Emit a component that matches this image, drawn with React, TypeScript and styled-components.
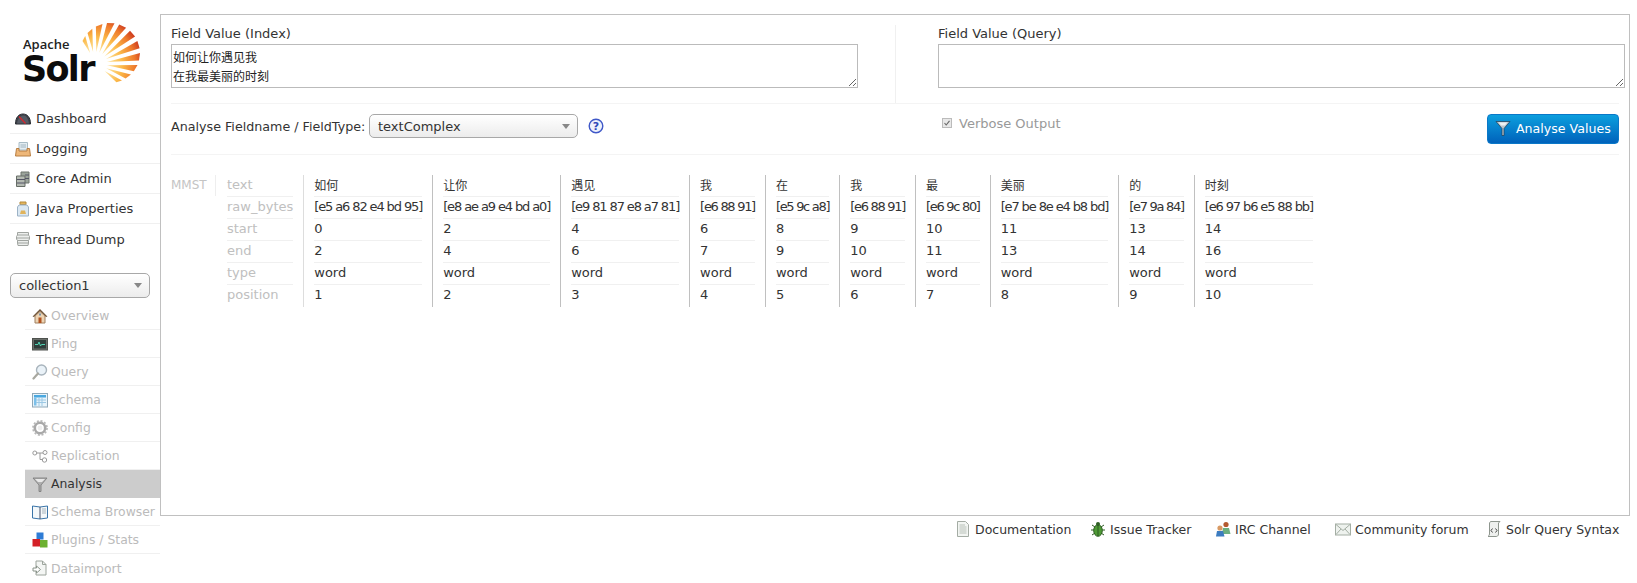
import React from "react";
import styled, { createGlobalStyle } from "styled-components";

const GlobalStyle = createGlobalStyle`
  html, body {
    margin: 0;
    padding: 0;
    height: 583px;
    overflow: hidden;
    background: #fff;
  }
  body {
    font-family: "DejaVu Sans", "Noto Sans CJK SC", sans-serif;
    font-size: 13px;
    color: #333;
  }
`;

const Page = styled.div`
  display: flex;
  width: 1637px;
  height: 583px;
  overflow: hidden;
`;

/* ---------- sidebar ---------- */

const Sidebar = styled.div`
  width: 160px;
  flex: none;
`;

const Logo = styled.div`
  display: flex;
  height: 104px;
  padding: 18px 0 0 22px;
  box-sizing: border-box;
`;

const LogoText = styled.div`
  width: 75px;
  flex: none;
  padding-top: 18px;
`;

const Apache = styled.div`
  font-family: "Open Sans", sans-serif;
  font-weight: 600;
  font-size: 13px;
  line-height: 17px;
  color: #222;
  margin-left: 1px;
`;

const SolrWord = styled.div`
  font-family: "DejaVu Sans", sans-serif;
  font-weight: 700;
  font-size: 35px;
  line-height: 33px;
  letter-spacing: -1.7px;
  color: #0c0c0c;
`;

const Nav = styled.div`
  margin-left: 10px;
`;

const NavRow = styled.div`
  display: flex;
  align-items: center;
  height: 30px;
  box-sizing: border-box;
  padding-left: 5px;
  gap: 5px;
  border-bottom: 1px solid #f0f0f0;
  color: #333;
  &:last-child {
    border-bottom: none;
  }
`;

const CoreSelect = styled.div`
  display: flex;
  align-items: center;
  justify-content: space-between;
  box-sizing: border-box;
  width: 140px;
  height: 25px;
  margin: 19px 0 0 10px;
  padding: 0 7px 0 8px;
  border: 1px solid #a8a8a8;
  border-radius: 5px;
  background: linear-gradient(#fff, #ececec);
  color: #333;
`;

const Caret = styled.span`
  width: 0;
  height: 0;
  border-left: 4px solid transparent;
  border-right: 4px solid transparent;
  border-top: 5px solid #888;
`;

const CoreMenu = styled.div`
  margin: 4px 0 0 25px;
`;

const CoreRow = styled.div<{ $active?: boolean }>`
  display: flex;
  align-items: center;
  height: 28px;
  box-sizing: border-box;
  padding-left: 7px;
  gap: 3px;
  font-size: 12.4px;
  white-space: nowrap;
  color: ${(p) => (p.$active ? "#333" : "#bbb")};
  background: ${(p) => (p.$active ? "#ccc" : "transparent")};
  border-bottom: 1px solid ${(p) => (p.$active ? "#ccc" : "#f0f0f0")};
  &:last-child {
    border-bottom: none;
  }
`;

const IconSvg = styled.svg`
  width: 16px;
  height: 16px;
  flex: none;
`;

/* ---------- main ---------- */

const Main = styled.div`
  flex: 1;
  min-width: 0;
  padding: 14px 7px 0 0;
`;

const Box = styled.div`
  box-sizing: border-box;
  height: 502px;
  padding: 10px 10px 0 10px;
  border: 1px solid #c0c0c0;
`;

const Fields = styled.div`
  display: grid;
  grid-template-columns: 724px 1fr;
  height: 79px;
  box-sizing: border-box;
  border-bottom: 1px solid #f4f4f4;
`;

const Field = styled.div<{ $right?: boolean }>`
  padding-left: ${(p) => (p.$right ? "42px" : "0")};
  border-left: ${(p) => (p.$right ? "1px solid #f0f0f0" : "none")};
`;

const FieldLabel = styled.div`
  height: 19px;
  line-height: 18px;
  color: #333;
`;

const FieldArea = styled.textarea`
  display: block;
  box-sizing: border-box;
  width: 687px;
  height: 44px;
  margin: 0;
  padding: 2px 1px;
  border: 1px solid #bbb;
  border-radius: 0;
  outline: none;
  font-family: "Noto Sans CJK SC", sans-serif;
  font-size: 12px;
  line-height: 19px;
  color: #222;
  overflow: hidden;
`;

const Controls = styled.div`
  display: grid;
  grid-template-columns: 724px 1fr;
  height: 51px;
  box-sizing: border-box;
  padding-top: 10px;
  border-bottom: 1px solid #f4f4f4;
`;

const FieldTypeGroup = styled.div`
  display: flex;
  align-items: flex-start;
`;

const FieldTypeLabel = styled.div`
  line-height: 26px;
  width: 198px;
  flex: none;
  font-size: 12.7px;
  white-space: nowrap;
`;

const TypeSelect = styled(CoreSelect)`
  width: 209px;
  height: 24px;
  margin: 0;
`;

const HelpIcon = styled.svg`
  width: 16px;
  height: 16px;
  margin: 4px 0 0 10px;
`;

const VerboseGroup = styled.div`
  display: flex;
  align-items: flex-start;
  padding-left: 46px;
`;

const Verbose = styled.div`
  display: flex;
  align-items: center;
  gap: 6px;
  height: 18px;
  color: #999;
`;

const AnalyseButton = styled.div`
  display: flex;
  align-items: center;
  gap: 5px;
  box-sizing: border-box;
  width: 132px;
  height: 30px;
  margin-left: auto;
  padding: 0 0 2px 7px;
  border: 1px solid #0a78c8;
  border-radius: 4px;
  background: linear-gradient(#0c9fde, #0062bb);
  color: #fff;
  font-size: 12.6px;
  white-space: nowrap;
`;

const Result = styled.div`
  display: flex;
  margin-top: 20px;
`;

const FilterName = styled.div`
  width: 44px;
  height: 21px;
  flex: none;
  line-height: 20px;
  font-size: 12px;
  color: #c4c4c4;
  border-right: 1px solid #eee;
`;

const Column = styled.div<{ $first?: boolean; $labels?: boolean }>`
  padding: 0 10px;
  margin-left: ${(p) => (p.$labels ? "1px" : "0")};
  border-left: ${(p) => (p.$labels ? "none" : p.$first ? "1px solid #ddd" : "1px solid #c0c0c0")};
  color: ${(p) => (p.$labels ? "#c0c0c0" : "#333")};
`;

const Cell = styled.div<{ $cjk?: boolean }>`
  height: 22px;
  box-sizing: border-box;
  line-height: ${(p) => (p.$cjk ? "22px" : "20px")};
  white-space: nowrap;
  border-bottom: 1px solid #f0f0f0;
  font-size: ${(p) => (p.$cjk ? "12px" : "13px")};
  &:last-child {
    border-bottom: none;
  }
`;

const RawCell = styled(Cell)<{ $short: boolean }>`
  letter-spacing: ${(p) => (p.$short ? "-1.3px" : "-1.12px")};
`;

const Footer = styled.div`
  display: flex;
  justify-content: flex-end;
  height: 18px;
  margin-top: 4px;
  padding-right: 10px;
`;

const FooterLink = styled.div<{ $w: number }>`
  display: flex;
  align-items: center;
  gap: 4px;
  width: ${(p) => p.$w}px;
  font-size: 12.5px;
  white-space: nowrap;
`;

/* ---------- drawings ---------- */

const icons: Record<string, React.ReactNode> = {
  dashboard: (
    <>
      <path d="M0.5 13 C0.5 6 4 3 8 3 S15.5 6 15.5 13 Z" fill="#3c4048" stroke="#2a2d33" />
      <path d="M2 12.5 C3 7 5 5 8 4.5 S13 7 14 12.5" fill="#555a64" />
      <path d="M4 5.5 L10.5 12.5" stroke="#d8262c" strokeWidth="1.3" />
    </>
  ),
  logging: (
    <>
      <path d="M4 1.5 H12.5 V9 H4 Z" fill="#e4edf2" stroke="#a8bcc6" />
      <path d="M5.5 4 H11 M5.5 6 H11" stroke="#9fb4c0" />
      <path d="M1.5 7.5 H4 V10 H12 V7.5 H14.5 L15.5 15 H0.5 Z" fill="#eeb779" stroke="#b87e42" />
    </>
  ),
  core: (
    <>
      <path d="M6 1 H14 V12 H6 Z" fill="#9aa39a" stroke="#6c746c" />
      <path d="M1.5 5 H10 V15.5 H1.5 Z" fill="#b4bab2" stroke="#666d66" />
      <path d="M2 8.5 H10 M2 12 H10 M10 4 H14 M10 7.5 H14" stroke="#556" />
    </>
  ),
  java: (
    <>
      <path d="M5 1 H11 V3.5 H5 Z" fill="#e3b55c" stroke="#b58a3a" />
      <path d="M4 4 H12 L13.5 6 V15 H2.5 V6 Z" fill="#dbe8f2" stroke="#9cb2c6" />
      <path d="M6 9.5 H10 L11 13 H5 Z" fill="#e0b35c" />
    </>
  ),
  thread: (
    <>
      <path d="M2.5 1.5 H13.5 V4 L14.5 5.5 V8 L13.5 9.5 V12 L13 14.5 H3 L2.5 12 V9.5 L1.5 8 V5.5 L2.5 4 Z" fill="#eceeec" stroke="#a0a4a0" />
      <path d="M2.5 4 H13.5 M2 7 H14 M2.5 9.5 H13.5 M3 12 H13" stroke="#a0a4a0" />
    </>
  ),
  overview: (
    <>
      <path d="M8 1 L15.5 8.5 L14 9 L8 3.5 L2 9 L0.5 8.5 Z" fill="#70573c" />
      <path d="M3 8 L8 3.5 L13 8 V15 H3 Z" fill="#ecd4b4" stroke="#a08060" />
      <rect x="6.5" y="9.5" width="3" height="5.5" fill="#b2521e" />
      <rect x="7" y="5.5" width="2" height="2" fill="#7a94a8" />
    </>
  ),
  ping: (
    <>
      <rect x="0.5" y="2.5" width="15" height="11.5" fill="#6a6e6a" stroke="#4e524e" />
      <rect x="2" y="4" width="12" height="8.5" fill="#2e3d3a" />
      <path d="M3 8.5 H6 L7 6 L8.5 10 L9.5 8.5 H13" stroke="#4fd0b0" fill="none" />
    </>
  ),
  query: (
    <>
      <circle cx="9.5" cy="6" r="5" fill="#eaf2f8" stroke="#a8b4bc" strokeWidth="1.4" />
      <path d="M6 9.5 L1.5 14.5" stroke="#a8a8a0" strokeWidth="2.2" strokeLinecap="round" />
    </>
  ),
  schema: (
    <>
      <rect x="0.5" y="1.5" width="15" height="13.5" fill="#e8f4fb" stroke="#8fa8b8" />
      <rect x="2" y="3" width="12" height="2.5" fill="#4aa8e0" />
      <rect x="2" y="5.5" width="2.5" height="8" fill="#7cc0ea" />
      <path d="M7 5.5 V14 M10 5.5 V14 M4 8 H14 M4 10.5 H14" stroke="#9cc8e4" />
    </>
  ),
  config: (
    <>
      <circle cx="8" cy="8" r="5.2" fill="none" stroke="#a8a8a8" strokeWidth="2.6" />
      <circle cx="8" cy="8" r="7" fill="none" stroke="#b8b8b8" strokeWidth="1.8" strokeDasharray="2 1.7" />
      <circle cx="8" cy="8" r="2.4" fill="#eee" />
    </>
  ),
  replication: (
    <>
      <path d="M4 5 H12 M8 5 V11.5 H11" fill="none" stroke="#9a9a9a" />
      <circle cx="2.8" cy="5" r="2" fill="#fff" stroke="#9a9a9a" />
      <circle cx="13" cy="4.5" r="2" fill="#fff" stroke="#9a9a9a" />
      <circle cx="12.5" cy="12" r="2.2" fill="#fff" stroke="#9a9a9a" />
    </>
  ),
  analysis: (
    <>
      <path d="M1 2 H15 L9 9 V15.5 H7 V9 Z" fill="#b0b0b0" stroke="#777" strokeWidth="0.8" />
      <path d="M3 3 H13 L10 6 H6 Z" fill="#e8e8e8" />
    </>
  ),
  browser: (
    <>
      <path d="M0.5 2 L8 3 L15.5 2 V14 L8 15 L0.5 14 Z" fill="#f4f8fa" stroke="#3a74a8" />
      <path d="M8 3 V15" stroke="#44506a" />
      <path d="M10 5 H14 M10 7 H14 M10 9 H14" stroke="#a8b4bc" />
    </>
  ),
  plugins: (
    <>
      <rect x="4.5" y="0.5" width="7" height="7" fill="#2e7cd6" />
      <rect x="0.5" y="7" width="7.5" height="7.5" fill="#d42027" />
      <rect x="8" y="8" width="7.5" height="7.5" fill="#6cb030" />
    </>
  ),
  dataimport: (
    <>
      <path d="M4 1 H10.5 L14 4.5 V15 H4 Z" fill="#f4f6f4" stroke="#9ca49c" />
      <path d="M10.5 1 V4.5 H14" fill="none" stroke="#9ca49c" />
      <path d="M1 8 H4.5 V6 L8.5 9.5 L4.5 13 V11 H1 Z" fill="#fff" stroke="#8a948a" />
    </>
  ),
  doc: (
    <>
      <path d="M2.5 0.5 H10.5 L13.5 3.5 V15.5 H2.5 Z" fill="#f2f5f2" stroke="#a4aca4" />
      <path d="M4.5 4 H10 M4.5 6 H11.5 M4.5 8 H11.5 M4.5 10 H11.5 M4.5 12 H11.5" stroke="#b8c0b8" />
    </>
  ),
  bug: (
    <>
      <path d="M2 4 L5 6 M14 4 L11 6 M1 9 H4 M15 9 H12 M2 14 L5 12 M14 14 L11 12" stroke="#2f5a24" />
      <ellipse cx="8" cy="9.5" rx="4.3" ry="5.8" fill="#4e9a36" stroke="#2c5c20" />
      <circle cx="8" cy="3" r="2" fill="#2f5f24" />
      <path d="M8 4 V15" stroke="#2c5c20" />
    </>
  ),
  people: (
    <>
      <circle cx="11" cy="3.5" r="2.6" fill="#b45a30" />
      <path d="M8 7 H14 L15.5 13 H7 Z" fill="#6cb080" />
      <circle cx="5" cy="7" r="2.6" fill="#d89a64" />
      <path d="M1 15.5 L2 10 H8 L9.5 15.5 Z" fill="#3c7cc0" />
    </>
  ),
  mail: (
    <>
      <rect x="0.5" y="3" width="15" height="11" fill="#eef2ee" stroke="#a4aea4" />
      <path d="M1 3.5 L8 9.5 L15 3.5 M1 13.5 L6 8 M15 13.5 L10 8" fill="none" stroke="#a4aea4" />
    </>
  ),
  script: (
    <>
      <path d="M4.5 0.5 H14 L12.5 2 V13 C12.5 15 11 15.5 10 15.5 H2 C3 15 3.5 14 3.5 13 V2 Z" fill="#eef0ee" stroke="#8e968e" />
      <path d="M6.5 7.5 L5 9.5 L6.5 11.5 M9.5 7.5 L11 9.5 L9.5 11.5" fill="none" stroke="#444" />
    </>
  ),
};

const Icon = ({ name }: { name: string }) => (
  <IconSvg viewBox="0 0 16 16">{icons[name]}</IconSvg>
);

const ButtonFunnel = () => (
  <IconSvg viewBox="0 0 16 16">
    <path d="M1 1.5 H15 L9 8.5 V15.5 H7 V8.5 Z" fill="#b8c4cc" stroke="#1c3a52" strokeWidth="0.7" />
    <path d="M3.5 2.5 H12.5 L9.8 5.5 H6.2 Z" fill="#eef2f4" />
  </IconSvg>
);

// rays of the logo, cut from one focal point to the rim of a circle
const FOCUS = { x: 20, y: 46 };
const RIM = { x: 35, y: 35, r: 30 };

const rimPoint = (deg: number) => {
  const a = (deg * Math.PI) / 180;
  const dx = Math.cos(a);
  const dy = Math.sin(a);
  const fx = FOCUS.x - RIM.x;
  const fy = FOCUS.y - RIM.y;
  const b = fx * dx + fy * dy;
  const t = -b + Math.sqrt(b * b - (fx * fx + fy * fy - RIM.r * RIM.r));
  return `${(FOCUS.x + dx * t).toFixed(1)},${(FOCUS.y + dy * t).toFixed(1)}`;
};

const innerPoint = (deg: number, r: number) => {
  const a = (deg * Math.PI) / 180;
  return `${(FOCUS.x + Math.cos(a) * r).toFixed(1)},${(FOCUS.y + Math.sin(a) * r).toFixed(1)}`;
};

const rays = Array.from({ length: 11 }, (_, i) => -114 + i * 15);

const Sun = styled.svg`
  width: 70px;
  height: 70px;
  flex: none;
  margin-left: -22px;
`;

const SolrSun = () => (
  <Sun viewBox="0 0 70 70">
    <defs>
      <radialGradient id="sunGrad" gradientUnits="userSpaceOnUse" cx="20" cy="46" r="50">
        <stop offset="0.2" stopColor="#ffeeb0" />
        <stop offset="0.55" stopColor="#fbb848" />
        <stop offset="0.8" stopColor="#ee7a2c" />
        <stop offset="1" stopColor="#c8301c" />
      </radialGradient>
    </defs>
    {rays.map((deg) => (
      <polygon
        key={deg}
        fill="url(#sunGrad)"
        points={`${innerPoint(deg, 12)} ${rimPoint(deg - 4.6)} ${rimPoint(deg + 4.6)}`}
      />
    ))}
  </Sun>
);

/* ---------- data ---------- */

const labels = ["text", "raw_bytes", "start", "end", "type", "position"];

const tokens = [
  { text: "如何", raw: "[e5 a6 82 e4 bd 95]", start: 0, end: 2, pos: 1 },
  { text: "让你", raw: "[e8 ae a9 e4 bd a0]", start: 2, end: 4, pos: 2 },
  { text: "遇见", raw: "[e9 81 87 e8 a7 81]", start: 4, end: 6, pos: 3 },
  { text: "我", raw: "[e6 88 91]", start: 6, end: 7, pos: 4 },
  { text: "在", raw: "[e5 9c a8]", start: 8, end: 9, pos: 5 },
  { text: "我", raw: "[e6 88 91]", start: 9, end: 10, pos: 6 },
  { text: "最", raw: "[e6 9c 80]", start: 10, end: 11, pos: 7 },
  { text: "美丽", raw: "[e7 be 8e e4 b8 bd]", start: 11, end: 13, pos: 8 },
  { text: "的", raw: "[e7 9a 84]", start: 13, end: 14, pos: 9 },
  { text: "时刻", raw: "[e6 97 b6 e5 88 bb]", start: 14, end: 16, pos: 10 },
];

const mainNav = [
  ["dashboard", "Dashboard"],
  ["logging", "Logging"],
  ["core", "Core Admin"],
  ["java", "Java Properties"],
  ["thread", "Thread Dump"],
];

const coreNav = [
  ["overview", "Overview"],
  ["ping", "Ping"],
  ["query", "Query"],
  ["schema", "Schema"],
  ["config", "Config"],
  ["replication", "Replication"],
  ["analysis", "Analysis"],
  ["browser", "Schema Browser"],
  ["plugins", "Plugins / Stats"],
  ["dataimport", "Dataimport"],
];

const footerLinks = [
  { icon: "doc", label: "Documentation", w: 135 },
  { icon: "bug", label: "Issue Tracker", w: 125 },
  { icon: "people", label: "IRC Channel", w: 120 },
  { icon: "mail", label: "Community forum", w: 151 },
  { icon: "script", label: "Solr Query Syntax", w: 134 },
];

const App = () => {
  return (
    <Page>
      <GlobalStyle />
      <Sidebar>
        <Logo>
          <LogoText>
            <Apache>Apache</Apache>
            <SolrWord>Solr</SolrWord>
          </LogoText>
          <SolrSun />
        </Logo>
        <Nav>
          {mainNav.map(([icon, label]) => (
            <NavRow key={label}>
              <Icon name={icon} />
              {label}
            </NavRow>
          ))}
        </Nav>
        <CoreSelect>
          collection1
          <Caret />
        </CoreSelect>
        <CoreMenu>
          {coreNav.map(([icon, label]) => (
            <CoreRow key={label} $active={label === "Analysis"}>
              <Icon name={icon} />
              {label}
            </CoreRow>
          ))}
        </CoreMenu>
      </Sidebar>

      <Main>
        <Box>
          <Fields>
            <Field>
              <FieldLabel>Field Value (Index)</FieldLabel>
              <FieldArea defaultValue={"如何让你遇见我\n在我最美丽的时刻"} />
            </Field>
            <Field $right>
              <FieldLabel>Field Value (Query)</FieldLabel>
              <FieldArea defaultValue="" />
            </Field>
          </Fields>

          <Controls>
            <FieldTypeGroup>
              <FieldTypeLabel>Analyse Fieldname / FieldType:</FieldTypeLabel>
              <TypeSelect>
                textComplex
                <Caret />
              </TypeSelect>
              <HelpIcon viewBox="0 0 16 16">
                <circle cx="8" cy="8" r="6.8" fill="#eef2fc" stroke="#3f58c8" strokeWidth="1.4" />
                <text x="8" y="12" textAnchor="middle" fontSize="11" fontWeight="700" fill="#2f48b8">
                  ?
                </text>
              </HelpIcon>
            </FieldTypeGroup>
            <VerboseGroup>
              <Verbose>
                <svg width="12" height="12" viewBox="0 0 12 12">
                  <rect x="1.5" y="1.5" width="9" height="9" fill="#e8e8e8" stroke="#bbb" />
                  <path d="M3.5 6 L5.2 8 L8.5 3.8" fill="none" stroke="#666" strokeWidth="1.1" />
                </svg>
                Verbose Output
              </Verbose>
              <AnalyseButton>
                <ButtonFunnel />
                Analyse Values
              </AnalyseButton>
            </VerboseGroup>
          </Controls>

          <Result>
            <FilterName>MMST</FilterName>
            <Column $labels>
              {labels.map((l) => (
                <Cell key={l}>{l}</Cell>
              ))}
            </Column>
            {tokens.map((t, i) => (
              <Column key={i} $first={i === 0}>
                <Cell $cjk>{t.text}</Cell>
                <RawCell $short={t.raw.length < 12}>{t.raw}</RawCell>
                <Cell>{t.start}</Cell>
                <Cell>{t.end}</Cell>
                <Cell>word</Cell>
                <Cell>{t.pos}</Cell>
              </Column>
            ))}
          </Result>
        </Box>
        <Footer>
          {footerLinks.map((f) => (
            <FooterLink key={f.label} $w={f.w}>
              <Icon name={f.icon} />
              {f.label}
            </FooterLink>
          ))}
        </Footer>
      </Main>
    </Page>
  );
};

export default App;
